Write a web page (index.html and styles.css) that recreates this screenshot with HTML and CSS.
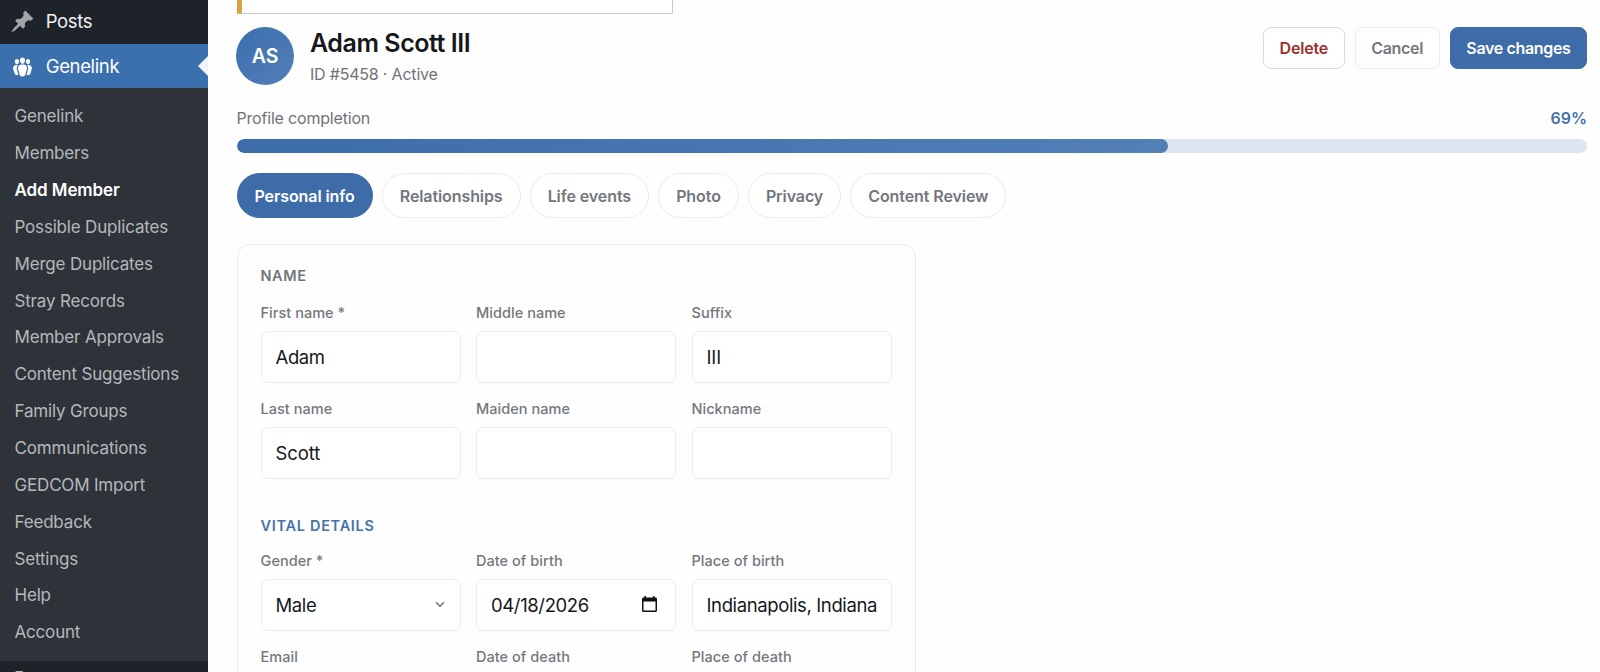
FILE: index.html
```html
<!DOCTYPE html>
<html lang="en">
<head>
<meta charset="utf-8">
<title>Edit member</title>
<link rel="stylesheet" href="styles.css">
</head>
<body>
<div class="app">
  <nav class="sidebar">
    <a class="menu-item">
      <svg class="menu-icon pin" viewBox="0 0 20 20"><path d="M10.44 3.02l1.82-1.82 6.36 6.35-1.83 1.82c-1.05-.68-2.48-.57-3.41.36l-.75.75c-.92.93-1.04 2.35-.35 3.41l-1.83 1.82-2.41-2.41-2.8 2.79c-.42.42-3.38 2.71-3.8 2.29s1.86-3.39 2.28-3.81l2.79-2.79L4.1 9.36l1.83-1.82c1.05.69 2.48.57 3.4-.36l.75-.75c.93-.92 1.05-2.35.36-3.41z"/></svg>
      <span>Posts</span>
    </a>
    <a class="menu-item current">
      <svg class="menu-icon" viewBox="0 0 20 20"><path d="M8.03 4.46c-.29 1.28.55 3.46 1.97 3.46 1.41 0 2.25-2.18 1.96-3.46-.22-.98-1.08-1.63-1.96-1.63-.89 0-1.74.65-1.97 1.63zm-4.13.9c-.25 1.08.47 2.93 1.67 2.93s1.92-1.85 1.67-2.93c-.19-.83-.92-1.39-1.67-1.39s-1.48.56-1.67 1.39zm8.86 0c-.25 1.08.47 2.93 1.66 2.93 1.2 0 1.92-1.85 1.67-2.93-.19-.83-.92-1.39-1.67-1.39-.74 0-1.47.56-1.66 1.39zm-.59 11.43l1.25-4.3C14.2 10 12.71 8.47 10 8.47c-2.72 0-4.21 1.53-3.44 4.02l1.26 4.3C8.05 17.51 9 18 10 18c.98 0 1.94-.49 2.17-1.21zm-6.1-7.63c-.49.67-.96 1.83-.42 3.59l1.12 3.79c-.34.2-.77.31-1.2.31-.85 0-1.65-.41-1.85-1.03l-1.07-3.65c-.65-2.11.61-3.4 2.92-3.4.27 0 .54.02.79.06-.1.1-.2.22-.29.33zm8.35-.39c2.31 0 3.58 1.29 2.92 3.4l-1.07 3.65c-.2.62-1 1.03-1.85 1.03-.43 0-.86-.11-1.2-.31l1.11-3.77c.55-1.78.08-2.94-.42-3.61-.08-.11-.18-.23-.28-.33.25-.04.51-.06.79-.06z"/></svg>
      <span>Genelink</span>
    </a>
    <div class="submenu">
      <a class="sub">Genelink</a>
      <a class="sub">Members</a>
      <a class="sub active">Add Member</a>
      <a class="sub">Possible Duplicates</a>
      <a class="sub">Merge Duplicates</a>
      <a class="sub">Stray Records</a>
      <a class="sub">Member Approvals</a>
      <a class="sub">Content Suggestions</a>
      <a class="sub">Family Groups</a>
      <a class="sub">Communications</a>
      <a class="sub">GEDCOM Import</a>
      <a class="sub">Feedback</a>
      <a class="sub">Settings</a>
      <a class="sub">Help</a>
      <a class="sub">Account</a>
    </div>
    <a class="menu-item next"><span>Pages</span></a>
  </nav>
  <main class="content">
    <div class="notice"></div>
    <header class="header">
      <div class="avatar">AS</div>
      <div class="identity">
        <h1 class="name">Adam Scott III</h1>
        <p class="meta">ID #5458 · Active</p>
      </div>
      <div class="actions">
        <button class="btn danger">Delete</button>
        <button class="btn">Cancel</button>
        <button class="btn primary">Save changes</button>
      </div>
    </header>
    <div class="progress-head"><span>Profile completion</span><span class="percent">69%</span></div>
    <div class="progress"><div class="progress-fill" style="width:69%"></div></div>
    <div class="tabs">
      <a class="tab selected">Personal info</a>
      <a class="tab">Relationships</a>
      <a class="tab">Life events</a>
      <a class="tab">Photo</a>
      <a class="tab">Privacy</a>
      <a class="tab">Content Review</a>
    </div>
    <section class="card">
      <h2 class="section-title">NAME</h2>
      <div class="grid">
        <div class="field"><label>First name *</label><div class="control"><span>Adam</span></div></div>
        <div class="field"><label>Middle name</label><div class="control"></div></div>
        <div class="field"><label>Suffix</label><div class="control loose"><span>III</span></div></div>
        <div class="field"><label>Last name</label><div class="control loose"><span>Scott</span></div></div>
        <div class="field"><label>Maiden name</label><div class="control"></div></div>
        <div class="field"><label>Nickname</label><div class="control"></div></div>
      </div>
      <h2 class="section-title vital">VITAL DETAILS</h2>
      <div class="grid">
        <div class="field"><label>Gender *</label><div class="control"><span>Male</span><svg class="chevron" viewBox="0 0 10 7"><path d="M1 1.2l4 4 4-4"/></svg></div></div>
        <div class="field"><label>Date of birth</label><div class="control"><span>04/18/2026</span><svg class="calendar" viewBox="0 0 15 16"><path fill-rule="evenodd" d="M2.4 0h1.6v1.5h7V0h1.6v1.5h.9c.8 0 1.500.7 1.500 1.500v11.500c0 .8-.7 1.500-1.500 1.500h-12C.7 16 0 15.300 0 14.500V3c0-.8.700-1.500 1.500-1.500h.9zM1.500 5.500v9h12v-9z"/></svg></div></div>
        <div class="field"><label>Place of birth</label><div class="control"><span>Indianapolis, Indiana</span></div></div>
        <div class="field"><label>Email</label><div class="control"></div></div>
        <div class="field"><label>Date of death</label><div class="control"></div></div>
        <div class="field"><label>Place of death</label><div class="control"></div></div>
      </div>
    </section>
  </main>
</div>
</body>
</html>
```

FILE: styles.css
```css
* { box-sizing: border-box; }

body {
  margin: 0;
  height: 672px;
  overflow: hidden;
  background: #fefefe;
  color: #16181b;
  font-family: Inter, "Liberation Sans", sans-serif;
}

.app { display: flex; height: 672px; overflow: hidden; }

.sidebar { width: 207.5px; flex: none; background: #1e2329; }

.menu-item {
  position: relative;
  display: flex;
  align-items: center;
  height: 44px;
  padding: 0 0 2px 9.5px;
  gap: 11.2px;
  color: #f0f0f1;
  font-size: 18.5px;
  letter-spacing: -0.35px;
}
.menu-icon { width: 25px; height: 25px; fill: #fff; }
.menu-icon.pin { fill: #a0a5aa; }
.menu-item.current { background: #3a70ad; color: #fff; padding-bottom: 0; }
.menu-item.current::after {
  content: "";
  position: absolute;
  right: 0;
  top: 12px;
  border: 10px solid transparent;
  border-left: 0;
  border-right-color: #f2f3f4;
}
.menu-item.next { padding: 6px 0 0 14px; align-items: flex-start; color: #b5b9bd; }

.submenu { height: 573px; padding-top: 10.3px; background: #2d3338; }
.sub {
  display: block;
  height: 36.87px;
  line-height: 36.87px;
  padding-left: 14.5px;
  font-size: 17px;
  letter-spacing: -0.18px;
  color: #b5b9bd;
  white-space: nowrap;
}
.sub.active { color: #fff; font-weight: 600; letter-spacing: -0.08px; }

.content { flex: 1; padding: 0 13px 0 29px; min-width: 0; }

.notice {
  width: 436px;
  height: 14px;
  border: 1.5px solid #c9cacc;
  border-top: 0;
  border-left: 5px solid #d5a53c;
  background: #fff;
}

.header { display: flex; align-items: flex-start; margin-top: 13px; height: 58px; }
.avatar {
  display: flex;
  align-items: center;
  justify-content: center;
  width: 58px;
  height: 58px;
  margin-left: -0.5px;
  border-radius: 50%;
  background: linear-gradient(135deg, #3c6fae, #527fb8);
  color: #fff;
  font-size: 19.5px;
  font-weight: 600;
}
.identity { margin-left: 16px; flex: 1; }
.name { margin: 0; font-size: 25px; font-weight: 600; line-height: 32px; letter-spacing: -0.45px; }
.meta { margin: 5px 0 0; font-size: 16px; line-height: 20px; letter-spacing: -0.2px; color: #6f7379; }

.actions { display: flex; gap: 10.3px; }
.btn {
  height: 42px;
  padding: 0 15.5px;
  border: 1px solid #ececee;
  border-radius: 8px;
  background: #fff;
  color: #75787e;
  font: 600 16px Inter, sans-serif;
  letter-spacing: -0.34px;
}
.btn.danger { color: #9b2f2b; border-color: #e6d6da; letter-spacing: -0.2px; }
.btn.primary { background: #3e6ca8; border-color: #3e6ca8; color: #fff; }

.progress-head {
  display: flex;
  justify-content: space-between;
  margin-top: 23px;
  line-height: 20px;
  font-size: 16px;
  letter-spacing: -0.19px;
  color: #6f7379;
}
.percent { color: #4672a9; font-weight: 600; letter-spacing: 0; }
.progress { height: 13.5px; margin-top: 11px; border-radius: 7px; background: #dde6f0; overflow: hidden; }
.progress-fill { height: 100%; border-radius: 7px; background: linear-gradient(90deg, #3c6caa, #527fb8); }

.tabs { display: flex; gap: 9.1px; margin-top: 20.5px; }
.tab {
  display: flex;
  align-items: center;
  height: 45px;
  padding: 0 17px;
  border: 1px solid #ebecee;
  border-radius: 23px;
  background: #fff;
  color: #73767d;
  font-size: 16px;
  font-weight: 600;
  letter-spacing: -0.09px;
}
.tab.selected { background: #3e6ca8; border-color: #3e6ca8; color: #fff; }

.card {
  width: 679.5px;
  height: 600px;
  margin-top: 26px;
  padding: 22px 23px;
  border: 1px solid #ebecee;
  border-radius: 13px;
}
.section-title { margin: 0 0 19px; font-size: 14.5px; line-height: 18px; font-weight: 600; letter-spacing: 0.6px; color: #73767d; }
.section-title.vital { margin: 38px 0 16.5px; letter-spacing: 0.7px; color: #4672ab; }
.grid { display: grid; grid-template-columns: repeat(3, 200px); gap: 17px 15.5px; }
.field label { display: block; margin-bottom: 9px; font-size: 14.5px; line-height: 18px; font-weight: 500; letter-spacing: 0.04px; color: #74777d; }
.control {
  display: flex;
  align-items: center;
  height: 52px;
  padding: 0 14px;
  border: 1px solid #ebecee;
  border-radius: 7px;
  background: #fff;
  font-size: 18.5px;
  letter-spacing: -0.38px;
  white-space: nowrap;
  overflow: hidden;
}
.control.loose { letter-spacing: -0.1px; }
.chevron { width: 10px; height: 7px; margin: 0 1px 0 auto; fill: none; stroke: #6b6e73; stroke-width: 1.4; }
.calendar { width: 15px; height: 16px; margin: 0 4px 2px auto; fill: #111; }
```
